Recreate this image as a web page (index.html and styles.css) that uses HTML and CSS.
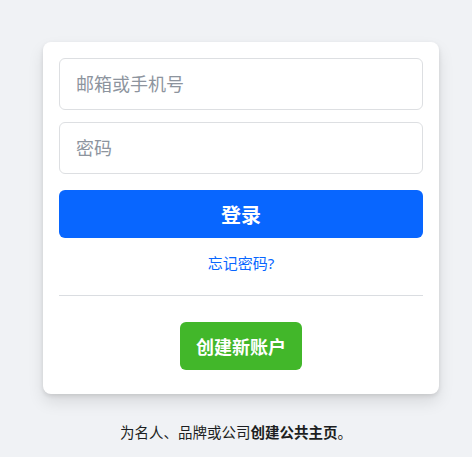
FILE: index.html
```html
<!DOCTYPE html>
<html lang="zh-CN">
<head>
    <meta charset="UTF-8">
    <meta name="viewport" content="width=device-width, initial-scale=1.0">
    <title>登录</title>
    <link rel="stylesheet" href="styles.css">
</head>
<body>
    <main class="page">
        <div class="login-card">
            <form id="login-form" class="login-form">
                <input type="text" id="login-email" placeholder="邮箱或手机号">
                <input type="password" id="login-password" placeholder="密码">
                <button type="submit" class="login-button">登录</button>
            </form>
            <a href="#" class="forgot-link">忘记密码?</a>
            <div class="divider"></div>
            <div class="signup-row">
                <button type="button" class="signup-button">创建新账户</button>
            </div>
        </div>
        <p class="page-note"><span>为名人、品牌或公司</span><a href="#">创建公共主页</a>。</p>
    </main>
</body>
</html>
```

FILE: styles.css
```css
body {
    margin: 0;
    background-color: #f0f2f5;
    font-family: "Noto Sans", "Noto Sans CJK SC", sans-serif;
    color: #1c1e21;
}
.page {
    padding-top: 42px;
}
.login-card {
    width: 396px;
    box-sizing: border-box;
    margin-left: 43px;
    padding: 16px 16px 24px;
    background-color: white;
    border-radius: 8px;
    box-shadow: 0 2px 4px rgba(0, 0, 0, 0.1), 0 8px 16px rgba(0, 0, 0, 0.1);
}
.login-form {
    display: flex;
    flex-direction: column;
    gap: 12px;
}
.login-form input {
    height: 52px;
    box-sizing: border-box;
    padding: 0 16px;
    border: 1px solid #dddfe2;
    border-radius: 6px;
    font-family: inherit;
    font-size: 18px;
    color: #1d2129;
    outline: none;
}
.login-form input::placeholder {
    color: #8d949e;
}
.login-button {
    margin-top: 4px;
    height: 48px;
    border: none;
    border-radius: 6px;
    background-color: #0866ff;
    color: white;
    font-family: inherit;
    font-size: 20px;
    font-weight: bold;
    cursor: pointer;
}
.forgot-link {
    display: block;
    margin-top: 16px;
    text-align: center;
    font-size: 15px;
    line-height: 19px;
    color: #0866ff;
    text-decoration: none;
}
.divider {
    margin: 22px 0 26px;
    height: 1px;
    background-color: #dadde1;
}
.signup-row {
    display: flex;
    justify-content: center;
}
.signup-button {
    height: 48px;
    padding: 0 16px;
    border: none;
    border-radius: 6px;
    background-color: #42b72a;
    color: white;
    font-family: inherit;
    font-size: 18px;
    font-weight: bold;
    cursor: pointer;
}
.page-note {
    margin: 28px 0 0;
    text-align: center;
    font-size: 14.5px;
    line-height: 20px;
}
.page-note a {
    color: #1c1e21;
    font-weight: bold;
    text-decoration: none;
}
```
